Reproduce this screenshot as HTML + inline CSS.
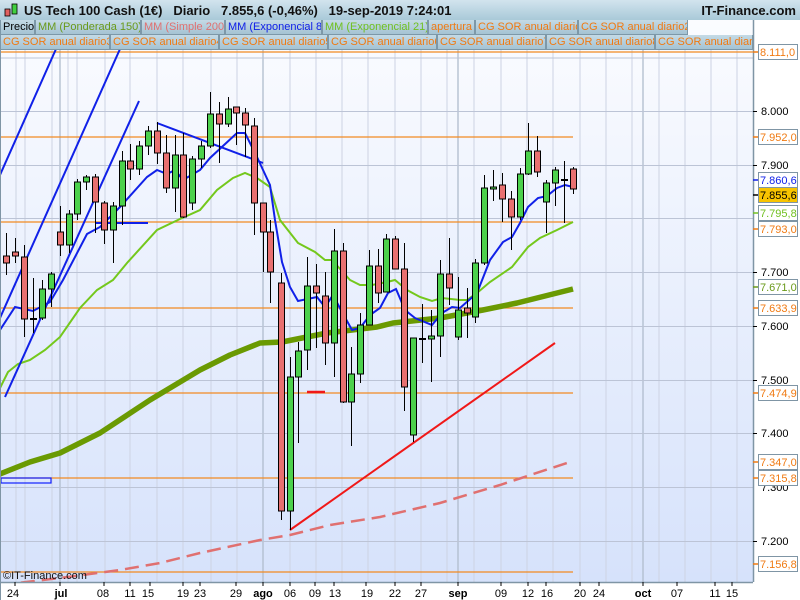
<!DOCTYPE html>
<html><head><meta charset="utf-8"><style>
*{margin:0;padding:0;box-sizing:border-box}
body{width:800px;height:600px;overflow:hidden;background:#fff;font-family:"Liberation Sans",sans-serif;position:relative}
#hdr{position:absolute;left:0;top:0;width:800px;height:20px}
#hdr .t{position:absolute;left:24px;top:3px;font-size:13px;font-weight:bold;color:#111;white-space:pre}
#hdr .r{position:absolute;right:4px;top:3px;font-size:13px;font-weight:bold;color:#111}
.row{position:absolute;left:0;height:15px;white-space:nowrap;font-size:11px}
.row span{display:inline-block;position:absolute;top:0;height:15px;line-height:14px;padding-left:2px;background:linear-gradient(#c4dae6,#a5c3d3);border:1px solid #7d98a8;border-top:none;overflow:hidden}
.o{color:#f07a12}
</style></head><body>
<div style="position:absolute;left:0;top:0;width:800px;height:20px;background:linear-gradient(#d2e4ee,#a9c9d8)"></div>
<svg width="800" height="600" style="position:absolute;left:0;top:0">
<defs><linearGradient id="bg" x1="0" y1="0" x2="0" y2="1"><stop offset="0" stop-color="#fbfcff"/><stop offset="1" stop-color="#d6e2fb"/></linearGradient></defs>
<rect x="0" y="20" width="753" height="562" fill="url(#bg)"/>
<g stroke="#cdd3e3" stroke-width="1">
<path d="M16 50V582M25 50V582M52 50V582M68 50V582M77 50V582M105 50V582M130 50V582M157 50V582M183 50V582M211 50V582M237 50V582M290 50V582M316 50V582M342 50V582M368 50V582M395 50V582M421 50V582M447 50V582M474 50V582M501 50V582M527 50V582M553 50V582M580 50V582M606 50V582M632 50V582M659 50V582M685 50V582M711 50V582M737 50V582"/>
</g>
<g stroke="#b0bccd" stroke-width="1.3"><path d="M60 50V582M263 50V582M458 50V582M643 50V582"/></g>
<g stroke="#bcc4d6" stroke-width="1"><path d="M0 58H753M0 111.5H753M0 165.5H753M0 218.5H753M0 272.5H753M0 326.5H753M0 380.5H753M0 433.5H753M0 487.5H753M0 541.5H753"/></g>
<g stroke="#f28a22" stroke-width="1.3" fill="none">
<path d="M0 52H753M0 137H573M0 222H573M0 308H573M0 393H573M0 478H573M0 572H573"/>
</g>
<rect x="1" y="478" width="50" height="5" fill="none" stroke="#1020ff" stroke-width="1.2"/>
<path d="M0 585 L60 578 L120 570 L160 563 L200 553 L260 540 L290 535 L330 525 L380 517 L440 503 L500 485 L573 461" fill="none" stroke="#e07070" stroke-width="2.5" stroke-dasharray="14,7"/>
<path d="M0 474 L30 462 L60 453 L100 433 L150 400 L200 370 L230 355 L260 343 L282 342 L327 333 L377 327 L393 323 L440 318 L483 310 L517 303 L545 296 L573 289" fill="none" stroke="#6a9a02" stroke-width="5.5" stroke-linejoin="round"/>
<path d="M0 388 L8 372 L18 364 L30 360 L45 350 L60 337 L80 308 L97 290 L113 280 L127 263 L157 230 L180 219 L200 210 L217 190 L233 178 L245 173 L257 178 L270 187 L280 220 L298 243 L315 252 L325 260 L332 260 L350 280 L360 285 L372 285 L387 282 L395 280 L407 290 L420 297 L432 301 L442 298 L460 300 L467 300 L477 293 L490 282 L512 267 L528 247 L540 238 L557 230 L573 222" fill="none" stroke="#74c81c" stroke-width="2"/>
<path d="M0 330 L15 307 L33 311 L50 302 L63 280 L87 234 L100 227 L120 207 L147 177 L157 170 L167 174 L175 170 L183 180 L200 170 L210 158 L237 133 L245 133 L257 157 L270 185 L275 220 L282 262 L290 287 L298 301 L317 297 L325 307 L333 295 L342 312 L352 330 L360 328 L370 315 L380 308 L388 293 L396 289 L405 310 L415 318 L432 325 L442 313 L452 307 L460 308 L477 293 L490 260 L503 242 L512 237 L520 223 L528 207 L538 198 L547 196 L557 188 L565 185 L573 187" fill="none" stroke="#1020e8" stroke-width="2"/>
<g stroke="#1020e8" stroke-width="2" fill="none">
<path d="M0 175 L56 49"/><path d="M0 318 L120 49"/><path d="M5 397 L139 101"/>
<path d="M95 223 L148 223"/><path d="M157 123 L263 163"/>
</g>
<path d="M290 530 L555 343" stroke="#f01818" stroke-width="2"/>
<path d="M307 392 L325 392" stroke="#f01818" stroke-width="2.5"/>
<g id="c" stroke="#000" stroke-width="1"></g>
<rect x="753" y="20" width="47" height="580" fill="#fff"/>
<path d="M753.5 20V582" stroke="#7f95a5" stroke-width="1.5"/>
<rect x="0" y="582" width="753" height="18" fill="#fff"/>
<path d="M0 582.5H753" stroke="#7f95a5" stroke-width="1.5"/>
<path d="M0.5 20V600" stroke="#7f95a5" stroke-width="1"/>
<g font-size="11" fill="#000" font-family="Liberation Sans">
<g stroke="#000"><path d="M753 111.5h4M753 165.5h4M753 272.5h4M753 326.5h4M753 380.5h4M753 433.5h4M753 541.5h4"/></g>
<text x="761" y="115">8.000</text><text x="761" y="169">7.900</text><text x="761" y="276">7.700</text><text x="761" y="330">7.600</text><text x="761" y="384">7.500</text><text x="761" y="437">7.400</text><text x="761" y="491">7.300</text><text x="761" y="545">7.200</text>
</g>
<g id="lb" font-size="11" font-family="Liberation Sans"></g>
<g font-size="11" font-family="Liberation Sans" fill="#000" text-anchor="middle">
<path d="M15 582v4M60 582v4M104 582v4M130 582v4M150 582v4M183 582v4M200 582v4M236 582v4M263 582v4M290 582v4M315 582v4M334 582v4M366 582v4M395 582v4M421 582v4M458 582v4M501 582v4M528 582v4M546 582v4M580 582v4M599 582v4M643 582v4M677 582v4M715 582v4M732 582v4" stroke="#000"/>
<text x="13" y="597">24</text><text x="61" y="597" font-weight="bold">jul</text><text x="103" y="597">08</text><text x="130" y="597">11</text><text x="148" y="597">15</text><text x="183" y="597">19</text><text x="200" y="597">23</text><text x="236" y="597">29</text><text x="263" y="597" font-weight="bold">ago</text><text x="290" y="597">06</text><text x="315" y="597">09</text><text x="335" y="597">13</text><text x="367" y="597">19</text><text x="395" y="597">22</text><text x="421" y="597">27</text><text x="458" y="597" font-weight="bold">sep</text><text x="501" y="597">09</text><text x="528" y="597">12</text><text x="547" y="597">16</text><text x="580" y="597">20</text><text x="599" y="597">24</text><text x="643" y="597" font-weight="bold">oct</text><text x="677" y="597">07</text><text x="715" y="597">11</text><text x="732" y="597">15</text>
</g>
<text x="3" y="579" font-size="11" font-family="Liberation Sans" fill="#111">©IT-Finance.com</text>
<rect x="5" y="9" width="5" height="7" fill="#e06060" stroke="#000" stroke-width="0.8"/>
<rect x="12" y="4" width="5" height="10" fill="#40d040" stroke="#000" stroke-width="0.8"/>
</svg>
<div id="hdr"><div class="t">US Tech 100 Cash (1€)   Diario   7.855,6 (-0,46%)   19-sep-2019 7:24:01</div><div class="r">IT-Finance.com</div></div>
<div class="row" style="top:20px">
<span style="left:0;width:35px;color:#000">Precio</span>
<span style="left:35px;width:106px;color:#6a9a1a">MM (Ponderada 150)</span>
<span style="left:141px;width:84px;color:#e07070">MM (Simple 200)</span>
<span style="left:225px;width:97px;color:#1020e8">MM (Exponencial 8)</span>
<span style="left:322px;width:106px;color:#70c020">MM (Exponencial 21)</span>
<span style="left:428px;width:47px" class="o">apertura</span>
<span style="left:475px;width:103px" class="o">CG SOR anual diario</span>
<span style="left:578px;width:110px" class="o">CG SOR anual diario2</span>
</div>
<div class="row" style="top:35px">
<span style="left:0;width:110px" class="o">CG SOR anual diario3</span>
<span style="left:110px;width:109px" class="o">CG SOR anual diario4</span>
<span style="left:219px;width:109px" class="o">CG SOR anual diario5</span>
<span style="left:328px;width:109px" class="o">CG SOR anual diario6</span>
<span style="left:437px;width:109px" class="o">CG SOR anual diario7</span>
<span style="left:546px;width:109px" class="o">CG SOR anual diario8</span>
<span style="left:655px;width:98px" class="o">CG SOR anual diario9</span>
</div>
<script>
var C=[[6,'r',256,263,233,275],[15,'r',252,256,238,263],[24,'r',257,319,245,337],[33,'d',319,319,278,333],[42,'g',289,318,280,320],[51,'g',274,289,272,307],[60,'r',232,245,206,256],[69,'g',214,245,210,253],[77,'g',182,214,179,220],[86,'g',177,182,175,190],[95,'r',177,202,174,233],[104,'r',203,230,201,244],[113,'g',206,230,202,263],[122,'g',161,206,151,225],[130,'r',161,169,144,180],[139,'g',146,169,141,175],[148,'g',131,146,126,155],[157,'r',131,153,122,164],[166,'r',153,188,135,193],[175,'g',155,188,135,212],[183,'r',155,217,133,218],[192,'g',159,203,156,210],[201,'g',146,159,141,168],[210,'g',114,146,92,148],[219,'r',114,124,102,163],[228,'g',109,124,97,127],[236,'r',107,113,107,145],[245,'r',113,125,108,157],[254,'r',126,203,118,235],[263,'r',203,232,203,272],[270,'r',232,272,220,303],[281,'r',283,511,273,520],[290,'g',377,511,357,530],[298,'g',351,377,342,443],[307,'g',286,350,257,370],[316,'r',286,293,264,348],[325,'r',296,343,272,365],[334,'g',251,343,229,377],[343,'r',251,402,243,403],[351,'g',374,402,347,446],[360,'g',325,374,313,383],[369,'g',266,325,250,325],[378,'r',266,293,249,303],[386,'g',239,292,234,292],[395,'r',239,269,236,269],[404,'r',269,387,243,411],[413,'g',338,435,338,442],[422,'d',339,339,304,363],[431,'g',336,339,310,382],[440,'g',274,336,260,357],[449,'r',274,288,238,305],[458,'g',310,337,277,340],[467,'r',308,313,288,338],[475,'g',263,317,259,323],[484,'g',188,263,175,265],[493,'g',187,189,170,201],[502,'r',185,199,173,222],[511,'r',199,217,191,250],[520,'g',174,217,168,220],[528,'g',151,174,123,175],[537,'r',151,172,136,177],[546,'g',183,202,180,233],[555,'g',170,183,167,206],[564,'d',180,180,161,223],[573,'r',169,189,167,194]];
var s='';C.forEach(function(c){var x=c[0];s+='<line x1="'+(x+0.5)+'" y1="'+c[4]+'" x2="'+(x+0.5)+'" y2="'+c[5]+'"/>';
if(c[1]=='d')s+='<line x1="'+(x-3)+'" y1="'+c[2]+'" x2="'+(x+4)+'" y2="'+c[2]+'" stroke-width="2"/>';
else s+='<rect x="'+(x-2.5)+'" y="'+c[2]+'" width="6" height="'+Math.max(2,c[3]-c[2])+'" fill="'+(c[1]=='g'?'#4cd14c':'#e87070')+'"/>';});
document.getElementById('c').innerHTML=s;
var L=[[52,'8.111,0','#f07a12','#fff'],[137,'7.952,0','#f07a12','#fff'],[180,'7.860,6','#1020e8','#fff'],[195,'7.855,6','#000','#f8c400'],[213,'7.795,8','#70c020','#fff'],[229,'7.793,0','#f07a12','#fff'],[287,'7.671,0','#6a9a1a','#fff'],[308,'7.633,9','#f07a12','#fff'],[393,'7.474,9','#f07a12','#fff'],[462,'7.347,0','#f07a12','#fff'],[478,'7.315,8','#f07a12','#fff'],[564,'7.156,8','#f07a12','#fff']];
var t='';L.forEach(function(l){var y=l[0];t+='<line x1="753" x2="758" y1="'+y+'" y2="'+y+'" stroke="'+l[2]+'" stroke-width="1.5"/><rect x="758.5" y="'+(y-7.5)+'" width="39" height="15" fill="'+l[3]+'" stroke="#7f95a5"/><text x="760" y="'+(y+4)+'" fill="'+l[2]+'">'+l[1]+'</text>';});
document.getElementById('lb').innerHTML=t;
</script>
</body></html>
